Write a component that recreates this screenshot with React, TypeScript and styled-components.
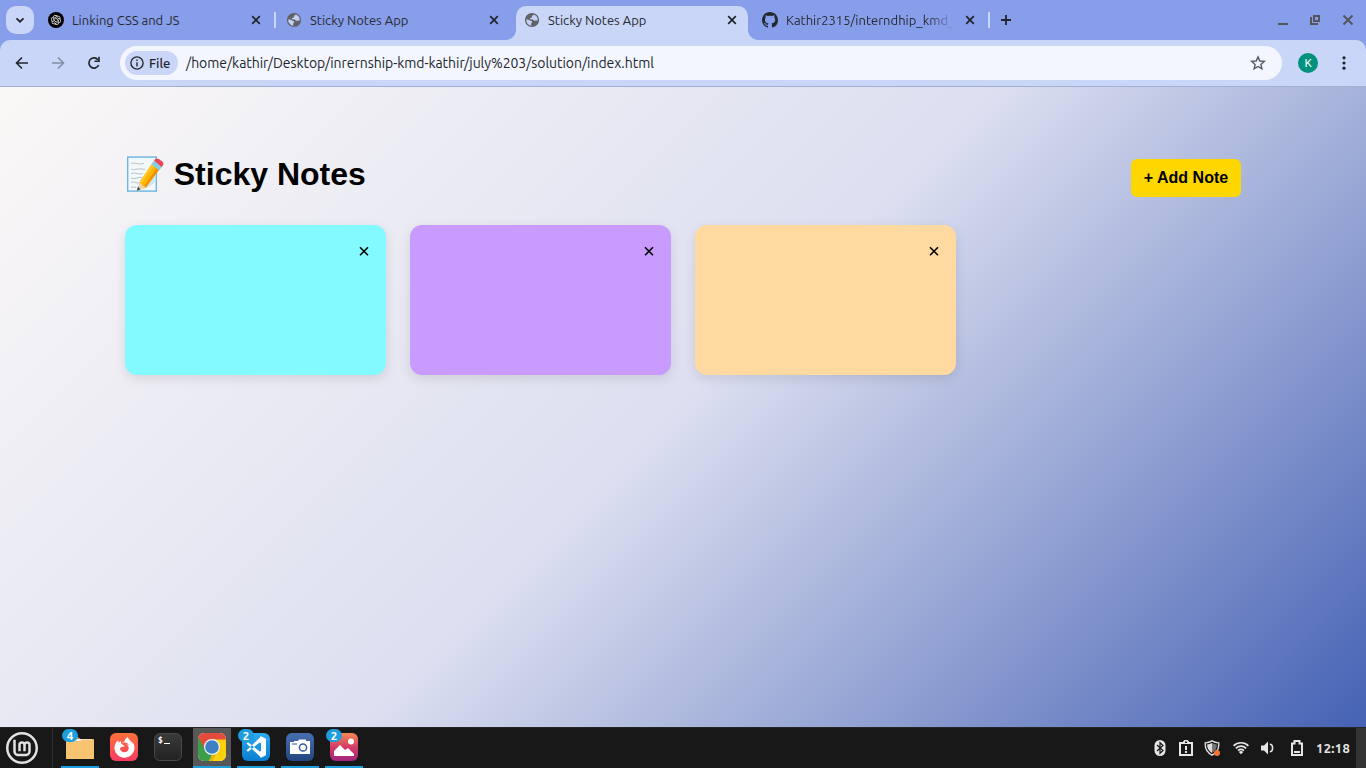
import React from "react";
import styled, { createGlobalStyle, css } from "styled-components";
import { RiOpenaiFill } from "react-icons/ri";
import { SiLinuxmint } from "react-icons/si";
import { FaFirefoxBrowser } from "react-icons/fa";

const uiFont = `"Ubuntu", "Noto Sans", "Open Sans", sans-serif`;

const GlobalStyle = createGlobalStyle`
  * { box-sizing: border-box; }
  body { margin: 0; overflow: hidden; }
  svg { display: block; flex: none; }
`;

const Screen = styled.div`
  width: 1366px;
  height: 768px;
  display: flex;
  flex-direction: column;
  overflow: hidden;
  background: #879eeb;
`;

/* ---------- browser tabs ---------- */

const TabStrip = styled.div`
  height: 40px;
  flex: none;
  display: flex;
  align-items: flex-end;
  padding-left: 6px;
  font-family: ${uiFont};
`;

const TabSearch = styled.div`
  width: 28px;
  height: 28px;
  margin: 0 6px 6px 0;
  border-radius: 10px;
  background: #cad6f8;
  display: grid;
  place-items: center;
`;

const Tab = styled.div<{ $active?: boolean }>`
  position: relative;
  width: 232px;
  height: 34px;
  display: flex;
  align-items: center;
  padding: 0 8px 6px;
  color: #272b33;
  ${(p) =>
    p.$active &&
    css`
      background: #cad6f8;
      border-radius: 10px 10px 0 0;
      &::before,
      &::after {
        content: "";
        position: absolute;
        bottom: 0;
        width: 10px;
        height: 10px;
      }
      &::before {
        left: -10px;
        background: radial-gradient(circle at 0 0, transparent 9.5px, #cad6f8 10.2px);
      }
      &::after {
        right: -10px;
        background: radial-gradient(circle at 100% 0, transparent 9.5px, #cad6f8 10.2px);
      }
    `}
`;

const Favicon = styled.div`
  width: 16px;
  height: 16px;
  display: grid;
  place-items: center;
`;

const GptBadge = styled(Favicon)`
  border-radius: 50%;
  background: #000;
  color: #fff;
`;

const TabTitle = styled.div<{ $fade?: boolean }>`
  width: 168px;
  margin-left: 8px;
  overflow: hidden;
  white-space: nowrap;
  font-size: 13px;
  line-height: 18px;
  ${(p) => p.$fade && css`mask-image: linear-gradient(90deg, #000 142px, transparent 168px);`}
`;

const CloseBox = styled.div`
  width: 16px;
  height: 16px;
  display: grid;
  place-items: center;
  margin-left: 8px;
`;

const TabGap = styled.div<{ $line?: boolean }>`
  width: 6px;
  height: 16px;
  margin-bottom: 12px;
  padding: 0 2px;
  &::before {
    content: "";
    display: block;
    height: 16px;
    background: ${(p) => (p.$line ? "#cad6f8" : "transparent")};
  }
`;

const NewTab = styled.div`
  width: 28px;
  height: 28px;
  margin-bottom: 6px;
  display: grid;
  place-items: center;
`;

const WindowButtons = styled.div`
  margin: 0 12px 14px auto;
  display: flex;
  align-items: center;
  gap: 20px;
`;

const CloseIcon = () => (
  <svg width="10" height="10" viewBox="0 0 10 10">
    <path d="M1.2 1.2 8.8 8.8M8.8 1.2 1.2 8.8" stroke="#20242c" strokeWidth="1.7" />
  </svg>
);

const GlobeIcon = () => (
  <svg width="16" height="16" viewBox="0 0 16 16">
    <circle cx="8" cy="8" r="7.1" fill="#5f6368" />
    <path
      d="M9.800 2.600c-.3.700-1.300.600-1.700 1.300-.4.700.2 1.200-.5 1.700-.700.500-1.700.3-1.800 1.100 0 .700.8.700 1.600.700 1.500 0 2.400.4 2.600 1.400.8.1 1.200-.4 2-.3.700.1 1 .3 1.700.1A5.900 5.900 0 0 0 9.800 2.600ZM2.200 7.600c1.200 0 3.300.100 4 .9.6.7 1.900.5 2 1.400.1.900-1.200.9-1.100 2 0 .700.500 1.100.4 1.900A5.900 5.900 0 0 1 2.200 7.600Z"
      fill="#c3d0f4"
    />
  </svg>
);

const GithubIcon = () => (
  <svg width="16" height="16" viewBox="0 0 16 16" fill="#24292f">
    <path d="M8 0C3.58 0 0 3.58 0 8c0 3.54 2.29 6.53 5.47 7.59.4.07.55-.17.55-.38 0-.19-.01-.82-.01-1.49-2.01.37-2.53-.49-2.69-.94-.09-.23-.48-.94-.82-1.13-.28-.15-.68-.52-.01-.53.63-.01 1.08.58 1.23.82.72 1.21 1.87.87 2.33.66.07-.52.28-.87.51-1.07-1.78-.2-3.64-.89-3.64-3.95 0-.87.31-1.59.82-2.15-.08-.2-.36-1.02.08-2.12 0 0 .67-.21 2.2.82.64-.18 1.32-.27 2-.27s1.36.09 2 .27c1.53-1.04 2.2-.82 2.2-.82.44 1.1.16 1.92.08 2.12.51.56.82 1.27.82 2.15 0 3.07-1.87 3.75-3.65 3.95.29.25.54.73.54 1.48 0 1.07-.01 1.93-.01 2.2 0 .21.15.46.55.38A8.01 8.01 0 0 0 16 8c0-4.42-3.58-8-8-8Z" />
  </svg>
);

/* ---------- address bar ---------- */

const Toolbar = styled.div`
  height: 47px;
  flex: none;
  display: flex;
  align-items: center;
  background: #cad6f8;
  border-radius: 10px 10px 0 0;
  border-bottom: 1px solid #a3aed0;
  padding-left: 14px;
`;

const NavButtons = styled.div`
  width: 106px;
  display: flex;
  gap: 20px;
`;

const AddressBar = styled.div`
  width: 1162px;
  height: 34px;
  border-radius: 17px;
  background: #f3f6fe;
  display: flex;
  align-items: center;
  padding: 0 16px 0 5px;
  font-family: ${uiFont};
  font-size: 14px;
  color: #22252b;
`;

const FileChip = styled.div`
  width: 53px;
  height: 24px;
  border-radius: 12px;
  background: #cad6f8;
  display: flex;
  align-items: center;
  gap: 5px;
  padding-left: 5px;
  font-size: 13px;
  font-weight: 500;
`;

const Url = styled.div`
  margin-left: 8px;
  flex: 1;
  white-space: nowrap;
  letter-spacing: -0.04px;
`;

const Avatar = styled.div`
  width: 20px;
  height: 20px;
  margin: 0 18px 0 16px;
  border-radius: 50%;
  background: #00917c;
  color: #fff;
  display: grid;
  place-items: center;
  font: 400 11.5px/20px "Roboto", sans-serif;
`;

/* ---------- page ---------- */

const Page = styled.main`
  height: 640px;
  flex: none;
  padding: 65px 125px 0;
  background: linear-gradient(135deg, #fbf8f7 0%, #dcdff0 50%, #4562b4 100%);
  font-family: "Liberation Sans", Arial, sans-serif;
  color: #000;
`;

const PageHeader = styled.header`
  display: flex;
  justify-content: space-between;
  align-items: flex-start;
  height: 73px;
`;

const Title = styled.h1`
  margin: 3px 0 0;
  display: flex;
  align-items: center;
  gap: 9.75px;
  font-size: 32px;
  line-height: 38px;
`;

const AddButton = styled.button`
  width: 110px;
  height: 38px;
  margin: 7px 0 0;
  padding: 0;
  border: 0;
  border-radius: 6px;
  background: #ffd700;
  color: #000;
  font: bold 16px/38px "Liberation Sans", Arial, sans-serif;
`;

const NoteGrid = styled.div`
  display: grid;
  grid-template-columns: repeat(4, 261px);
  gap: 24px;
`;

const Note = styled.article<{ $color: string }>`
  height: 150px;
  border-radius: 12px;
  background: ${(p) => p.$color};
  box-shadow: 0 4px 12px rgba(0, 0, 0, 0.1);
  display: flex;
  justify-content: flex-end;
  padding: 21px 17px 0 0;
`;

const NoteClose = () => (
  <svg width="10" height="10" viewBox="0 0 10 10">
    <path d="M1 1.200 9 9.200M9 1.200 1 9.200" stroke="#000" strokeWidth="1.600" />
  </svg>
);

const MemoIcon = () => (
  <svg width="39" height="38" viewBox="0 0 39 38">
    <rect x="2.700" y="2.100" width="28.600" height="34" fill="#f3f8fa" stroke="#6db5e0" strokeWidth="1.400" />
    <path
      d="M6 8.500q3-1 6 0t7 0M6 14q2 1.600 5 .3t9 .2M6 18.500q3-1 6 0t6 0M6 23q3 1.300 6 0t5-.3M6 27.500q3-1.200 5 0t4 0M6 32.500q2.500-1.300 5 0"
      fill="none"
      stroke="#a9b6be"
      strokeWidth=".8"
    />
    <path d="M17 34 30.500 17v9q-5 6.500-13.500 8Z" fill="#cfe7f5" />
    <path d="m15.200 27.200 6.300 5-6.500 3-2.500.3.300-2.800Z" fill="#f1d3a4" />
    <path d="m13 31.300 2.300 3.200-3.400 1.300Z" fill="#37474f" />
    <path d="M27.200 8.200 34.300 14.500 20.700 32.700q-1-2-2.700-1.800-.4-2-2.200-1.800-.2-1.500-1.300-1.900Z" fill="#ffb300" />
    <path d="M27.200 8.200 29.500 10 16.200 29.100q-.5-1.500-1.700-1.900Z" fill="#ffca28" />
    <path d="M32.200 12.600 34.300 14.500 20.700 32.700q-.6-1.500-1.500-1.800Z" fill="#f39200" />
    <path d="m26.300 9.500 2.700-4 8.100 5.900-3 4.100Z" fill="#82cfe0" />
    <path d="M29 5.500q2-3.200 5-1.300l3.300 2.300q2.100 2 .2 4.400l-.9 1Z" fill="#ee4358" />
  </svg>
);

/* ---------- desktop panel ---------- */

const Panel = styled.footer`
  height: 41px;
  flex: none;
  display: flex;
  align-items: stretch;
  background: #181818;
  border-top: 1px solid #252525;
`;

const MenuButton = styled.div`
  width: 53px;
  padding: 4px 0 0 6px;
  color: #e2e2e0;
  border-right: 1px solid #303030;
`;

const TaskList = styled.div`
  display: flex;
  gap: 6px;
  padding-left: 8px;
`;

const Task = styled.div<{ $open?: boolean; $focused?: boolean }>`
  position: relative;
  width: 38px;
  display: flex;
  justify-content: center;
  padding-top: 5px;
  background: ${(p) => (p.$focused ? "#575757" : "transparent")};
  border-bottom: 2px solid ${(p) => (p.$open ? "#1f9ede" : "transparent")};
`;

const AppTile = styled.div<{ $bg: string }>`
  width: 28px;
  height: 28px;
  border-radius: 6px;
  overflow: hidden;
  background: ${(p) => p.$bg};
  display: grid;
  place-items: center;
  color: #fff;
`;

const CountBadge = styled.div`
  position: absolute;
  left: 1px;
  top: 1px;
  width: 16px;
  height: 13px;
  border-radius: 7px;
  background: #1f9ede;
  color: #fff;
  font: 700 11.5px/13px ${uiFont};
  text-align: center;
`;

const TerminalTile = styled(AppTile)`
  border: 1px solid #484848;
  display: flex;
  align-items: flex-start;
  gap: 1px;
  padding: 2px 0 0 3px;
  font: bold 8px/9px "DejaVu Sans Mono", monospace;
  &::after {
    content: "";
    width: 6px;
    height: 1px;
    margin-top: 7px;
    background: #fff;
  }
`;

const Tray = styled.div`
  margin-left: auto;
  display: flex;
  align-items: center;
  height: 40px;
`;

const TraySlot = styled.div<{ $w: number }>`
  width: ${(p) => p.$w}px;
  display: flex;
  justify-content: center;
`;

const Clock = styled.div`
  width: 40px;
  color: #e4e4e4;
  font: 700 13px/18px ${uiFont};
  letter-spacing: 0.3px;
`;

const ShowDesktop = styled.div`
  width: 10px;
  height: 40px;
  background: #333;
`;

const FolderIcon = () => (
  <svg width="28" height="28" viewBox="0 0 28 28">
    <path d="M0 4h12l2.500 2H28v5H0Z" fill="#c58d43" />
    <path d="M2 6h24v5H2Z" fill="#f0f0f0" />
    <path d="M0 8h14l2.500-1.500H28V26H0Z" fill="#f8c471" />
  </svg>
);

const ChromeIcon = () => (
  <svg width="28" height="28" viewBox="0 0 28 28">
    <path d="M0 0h28v7H14L7 18 0 5Z" fill="#e34b3d" />
    <path d="M0 4 8 18l7 3-4 7H0Z" fill="#3c9e48" />
    <path d="M14 6.500h14V28H15l5-10Z" fill="#fbd00c" />
    <path d="m14 22 6-4-5 10h-4Z" fill="#e3b508" />
    <circle cx="14" cy="14" r="8" fill="#f4f6f6" />
    <circle cx="14" cy="14" r="6.800" fill="#3f80c4" />
  </svg>
);

const CodeIcon = () => (
  <svg width="28" height="28" viewBox="0 0 28 28">
    <path d="m4.500 10.500 1.500-1.200L19 19.500v5ZM4.500 17.500 6 18.700 19 8.500v-5Z" fill="#fff" />
    <path d="M18 3.500h1.500l4.500 2.300v16.400l-4.500 2.300H18Z" fill="#fff" />
    <path d="M19 9.500v9L13 14Z" fill="#1896e4" />
  </svg>
);

const CameraIcon = () => (
  <svg width="22" height="18" viewBox="0 0 22 18">
    <path d="M1 4h4V3h4l1-1.500h7V3h4v13H1Z" fill="#fff" />
    <path d="M3 6h5" stroke="#34599b" strokeWidth="1.200" />
    <circle cx="14" cy="9.500" r="3.600" fill="#fff" stroke="#34599b" strokeWidth="1.500" />
  </svg>
);

const PictureIcon = () => (
  <svg width="22" height="20" viewBox="0 0 22 20">
    <path d="M1 19v-5l6-6 5 5 3-2 6 6v2Z" fill="#fff" />
    <circle cx="18" cy="4.500" r="3" fill="#fff" />
  </svg>
);

const BluetoothIcon = () => (
  <svg width="12" height="16" viewBox="0 0 12 16">
    <rect x=".5" width="11" height="16" rx="5.500" fill="#e6e6e6" />
    <path d="m3 5 6 5.500L6 13.300V2.700L9 5.500 3 11" fill="none" stroke="#181818" strokeWidth="1.200" />
  </svg>
);

const ClipboardIcon = () => (
  <svg width="14" height="16" viewBox="0 0 14 16">
    <path d="M1 3h12v12H1Z" fill="none" stroke="#e6e6e6" strokeWidth="2" />
    <path d="M4 4V1.500L5.500 0h3L10 1.500V4ZM6 6h2v4H6ZM6 11h2v2H6Z" fill="#e6e6e6" />
    <path d="M6 1.500h2V3H6Z" fill="#181818" />
  </svg>
);

const ShieldIcon = () => (
  <svg width="16" height="16" viewBox="0 0 16 16">
    <path d="M8 .9q3 1.900 6.700 2Q15.500 11 8 15.100.500 11 1.300 2.900 5 2.800 8 .9Z" fill="none" stroke="#e0e0e0" strokeWidth="1.400" />
    <path d="M8 3q2.300 1.300 4.900 1.500Q13 10 8 13Z" fill="#777" />
    <path d="M8 3Q5.700 4.300 3.100 4.500 3 10 8 13Z" fill="#e0e0e0" />
    <circle cx="13" cy="13" r="3" fill="#f37334" />
  </svg>
);

const WifiIcon = () => (
  <svg width="16" height="14" viewBox="0 0 16 14">
    <g fill="none" stroke="#e6e6e6" strokeWidth="1.700">
      <path d="M.6 4.800a10.500 10.500 0 0 1 14.800 0" />
      <path d="M2.900 7.300a7.200 7.200 0 0 1 10.200 0" />
      <path d="M5.100 9.600a4.100 4.100 0 0 1 5.800 0" />
    </g>
    <path d="m5.800 11 2.200 2.300 2.200-2.300a3.100 3.100 0 0 0-4.400 0Z" fill="#e6e6e6" />
  </svg>
);

const VolumeIcon = () => (
  <svg width="13" height="14" viewBox="0 0 13 14">
    <path d="M0 4.500h3L7 .5v13l-4-4H0Z" fill="#e6e6e6" />
    <path d="M8.800 3.300q2.800 0 2.800 3.700t-2.800 3.700" fill="none" stroke="#e6e6e6" strokeWidth="1.500" />
  </svg>
);

const BatteryIcon = () => (
  <svg width="12" height="16" viewBox="0 0 12 16">
    <path d="M1 3.500h2.500V1h5v2.500H11V15H1Z" fill="none" stroke="#e6e6e6" strokeWidth="2" />
    <path d="M3 11h6v2H3Z" fill="#e6e6e6" />
  </svg>
);

export default function App() {
  return (
    <Screen>
      <GlobalStyle />
      <TabStrip>
        <TabSearch>
          <svg width="10" height="10" viewBox="0 0 10 10">
            <path d="m1.500 3.300 3.500 3.400 3.500-3.400" fill="none" stroke="#20242c" strokeWidth="1.800" />
          </svg>
        </TabSearch>
        <Tab>
          <GptBadge>
            <RiOpenaiFill size={12} />
          </GptBadge>
          <TabTitle>Linking CSS and JS</TabTitle>
          <CloseBox><CloseIcon /></CloseBox>
        </Tab>
        <TabGap $line />
        <Tab>
          <Favicon><GlobeIcon /></Favicon>
          <TabTitle>Sticky Notes App</TabTitle>
          <CloseBox><CloseIcon /></CloseBox>
        </Tab>
        <TabGap />
        <Tab $active>
          <Favicon><GlobeIcon /></Favicon>
          <TabTitle>Sticky Notes App</TabTitle>
          <CloseBox><CloseIcon /></CloseBox>
        </Tab>
        <TabGap />
        <Tab>
          <Favicon><GithubIcon /></Favicon>
          <TabTitle $fade>Kathir2315/interndhip_kmd_</TabTitle>
          <CloseBox><CloseIcon /></CloseBox>
        </Tab>
        <TabGap $line />
        <NewTab>
          <svg width="12" height="12" viewBox="0 0 12 12">
            <path d="M6 1v10M1 6h10" stroke="#20242c" strokeWidth="1.800" />
          </svg>
        </NewTab>
        <WindowButtons>
          <svg width="12" height="12" viewBox="0 0 12 12">
            <path d="M0 10h10" stroke="#55565c" strokeWidth="2" />
          </svg>
          <svg width="12" height="12" viewBox="0 0 12 12">
            <path d="M4 2h5v5H4ZM1 3v7h7" fill="none" stroke="#55565c" strokeWidth="2" />
          </svg>
          <svg width="12" height="12" viewBox="0 0 12 12">
            <path d="m1.500 1.500 9 9M10.500 1.500l-9 9" stroke="#55565c" strokeWidth="2" />
          </svg>
        </WindowButtons>
      </TabStrip>

      <Toolbar>
        <NavButtons>
          <svg width="16" height="16" viewBox="0 0 16 16">
            <path d="M14 8H3M8 2.500 2.500 8 8 13.500" fill="none" stroke="#20242c" strokeWidth="1.600" />
          </svg>
          <svg width="16" height="16" viewBox="0 0 16 16">
            <path d="M2 8h11M8 2.500 13.500 8 8 13.500" fill="none" stroke="#858da5" strokeWidth="1.600" />
          </svg>
          <svg width="16" height="16" viewBox="0 0 16 16">
            <path d="M12.700 10A5.100 5.100 0 1 1 12 4.700" fill="none" stroke="#20242c" strokeWidth="1.700" />
            <path d="M13.800 1.800v5.200H8.500V5.600h3.700V1.800Z" fill="#20242c" />
          </svg>
        </NavButtons>
        <AddressBar>
          <FileChip>
            <svg width="14" height="14" viewBox="0 0 14 14">
              <circle cx="7" cy="7" r="6.100" fill="none" stroke="#272b33" strokeWidth="1.400" />
              <path d="M7 3.500V5M7 6.300v4.200" stroke="#272b33" strokeWidth="1.400" />
            </svg>
            File
          </FileChip>
          <Url>/home/kathir/Desktop/inrernship-kmd-kathir/july%203/solution/index.html</Url>
          <svg width="16" height="16" viewBox="0 0 16 16">
            <path
              d="m8 1.900 1.800 4.100 4.500.4-3.400 3 1 4.400L8 11.500l-3.900 2.300 1-4.400-3.400-3 4.500-.4Z"
              fill="none"
              stroke="#55585f"
              strokeWidth="1.400"
            />
          </svg>
        </AddressBar>
        <Avatar>K</Avatar>
        <svg width="16" height="16" viewBox="0 0 16 16" fill="#20242c">
          <circle cx="8" cy="2.800" r="1.600" />
          <circle cx="8" cy="8" r="1.600" />
          <circle cx="8" cy="13.200" r="1.600" />
        </svg>
      </Toolbar>

      <Page>
        <PageHeader>
          <Title>
            <MemoIcon />
            Sticky Notes
          </Title>
          <AddButton>+ Add Note</AddButton>
        </PageHeader>
        <NoteGrid>
          {["#82faff", "#c99bff", "#ffd9a0"].map((color) => (
            <Note key={color} $color={color}>
              <NoteClose />
            </Note>
          ))}
        </NoteGrid>
      </Page>

      <Panel>
        <MenuButton>
          <SiLinuxmint size={32} />
        </MenuButton>
        <TaskList>
          <Task $open>
            <FolderIcon />
            <CountBadge>4</CountBadge>
          </Task>
          <Task>
            <AppTile $bg="linear-gradient(#ff7139, #fb3b62)">
              <FaFirefoxBrowser size={21} />
            </AppTile>
          </Task>
          <Task>
            <TerminalTile $bg="linear-gradient(#3a3a3a, #222)">$</TerminalTile>
          </Task>
          <Task $open $focused>
            <AppTile $bg="#fff">
              <ChromeIcon />
            </AppTile>
          </Task>
          <Task $open>
            <AppTile $bg="linear-gradient(#2eaaf0, #087ed0)">
              <CodeIcon />
            </AppTile>
            <CountBadge>2</CountBadge>
          </Task>
          <Task $open>
            <AppTile $bg="linear-gradient(#476fb0, #24467f)">
              <CameraIcon />
            </AppTile>
          </Task>
          <Task $open>
            <AppTile $bg="linear-gradient(#f58a50, #d53c69 50%, #a0257e)">
              <PictureIcon />
            </AppTile>
            <CountBadge>2</CountBadge>
          </Task>
        </TaskList>
        <Tray>
          <TraySlot $w={26}><BluetoothIcon /></TraySlot>
          <TraySlot $w={26}><ClipboardIcon /></TraySlot>
          <TraySlot $w={26}><ShieldIcon /></TraySlot>
          <TraySlot $w={32}><WifiIcon /></TraySlot>
          <TraySlot $w={21}><VolumeIcon /></TraySlot>
          <TraySlot $w={38}><BatteryIcon /></TraySlot>
          <Clock>12:18</Clock>
          <ShowDesktop />
        </Tray>
      </Panel>
    </Screen>
  );
}
